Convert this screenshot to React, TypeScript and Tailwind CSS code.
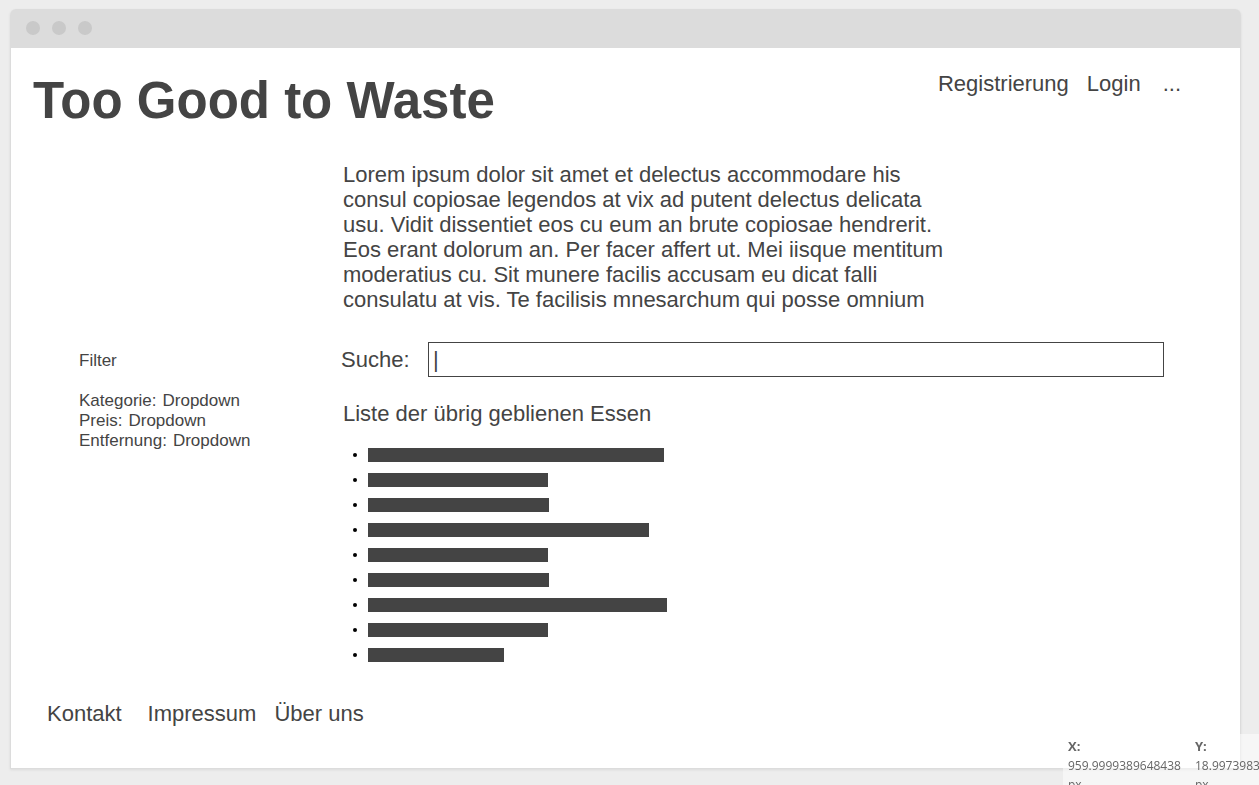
const filters = ["Kategorie", "Preis", "Entfernung"];

const mealBars = [296, 180, 181, 281, 180, 181, 299, 180, 136];

const intro = [
  "Lorem ipsum dolor sit amet et delectus accommodare his",
  "consul copiosae legendos at vix ad putent delectus delicata",
  "usu. Vidit dissentiet eos cu eum an brute copiosae hendrerit.",
  "Eos erant dolorum an. Per facer affert ut. Mei iisque mentitum",
  "moderatius cu. Sit munere facilis accusam eu dicat falli",
  "consulatu at vis. Te facilisis mnesarchum qui posse omnium",
];

function TitleBar() {
  return (
    <div className="flex h-[39px] items-start gap-3 rounded-t-md bg-[#dcdcdc] pt-3 pl-4">
      <span className="size-[14px] rounded-full bg-[#c9c9c9]" />
      <span className="size-[14px] rounded-full bg-[#c9c9c9]" />
      <span className="size-[14px] rounded-full bg-[#c9c9c9]" />
    </div>
  );
}

function FilterPanel() {
  return (
    <aside className="w-[262px] shrink-0 pt-[189px] text-[17px] leading-5">
      <h2 className="mb-5">Filter</h2>
      {filters.map((name) => (
        <label key={name} className="flex h-5 gap-[6px]">
          {name}:
          <select className="h-5 appearance-none bg-transparent p-0 leading-5">
            <option>Dropdown</option>
          </select>
        </label>
      ))}
    </aside>
  );
}

function Coordinates() {
  return (
    <div className="fixed right-0 bottom-0 flex h-[51px] w-[196px] gap-[10px] overflow-hidden bg-white/50 pt-[3px] pl-[5px] font-['Open_Sans',sans-serif] text-[12px] leading-[19px] text-[#666]">
      <dl className="w-[117px] shrink-0">
        <dt className="text-[13px] leading-[19px] font-bold">X:</dt>
        <dd>959.9999389648438 px</dd>
      </dl>
      <dl className="w-[117px] shrink-0">
        <dt className="text-[13px] leading-[19px] font-bold">Y:</dt>
        <dd>18.99739837646484 px</dd>
      </dl>
    </div>
  );
}

export default function App() {
  return (
    <div className="min-h-screen bg-[#ededed] pt-[9px] pr-[18px] pb-4 pl-[10px] font-['Liberation_Sans',Arial,sans-serif] text-[22px] leading-[25px] text-[#444]">
      <div className="rounded-t-md shadow-[0_1px_3px_rgba(0,0,0,0.08)]">
        <TitleBar />
        <div className="border border-t-0 border-[#dcdcdc] bg-white">
          <header className="flex items-start justify-between pt-[23px] pr-[59px] pl-[22px]">
            <h1 className="pt-[2px] text-[51px] leading-[56px] font-bold">Too Good to Waste</h1>
            <nav className="flex">
              <a href="#registrierung">Registrierung</a>
              <a href="#login" className="ml-[18px]">Login</a>
              <a href="#mehr" className="ml-[22px]">...</a>
            </nav>
          </header>

          <div className="flex pt-[33px] pr-[76px] pl-[68px]">
            <FilterPanel />
            <main className="min-w-0 grow">
              <p className="pl-[2px]">
                {intro.map((line) => (
                  <span key={line} className="block whitespace-nowrap">{line}</span>
                ))}
              </p>
              <div className="mt-[30px] flex items-center">
                <label htmlFor="suche" className="w-[87px] shrink-0">Suche:</label>
                <input
                  id="suche"
                  type="text"
                  defaultValue="|"
                  className="h-[35px] min-w-0 grow border border-[#444] bg-white px-1 outline-none"
                />
              </div>
              <h2 className="mt-6 pl-[2px]">Liste der übrig geblienen Essen</h2>
              <ul className="mt-4">
                {mealBars.map((width, i) => (
                  <li key={i} className="flex h-[25px] items-center gap-[11px] pl-3">
                    <span className="size-1 rounded-full bg-black" />
                    <span className="h-[14px] bg-[#444]" style={{ width }} />
                  </li>
                ))}
              </ul>
            </main>
          </div>

          <footer className="flex pt-[34px] pb-[42px] pl-9">
            <a href="#kontakt">Kontakt</a>
            <a href="#impressum" className="ml-[26px]">Impressum</a>
            <a href="#ueber-uns" className="ml-[18px]">Über uns</a>
          </footer>
        </div>
      </div>
      <Coordinates />
    </div>
  );
}
